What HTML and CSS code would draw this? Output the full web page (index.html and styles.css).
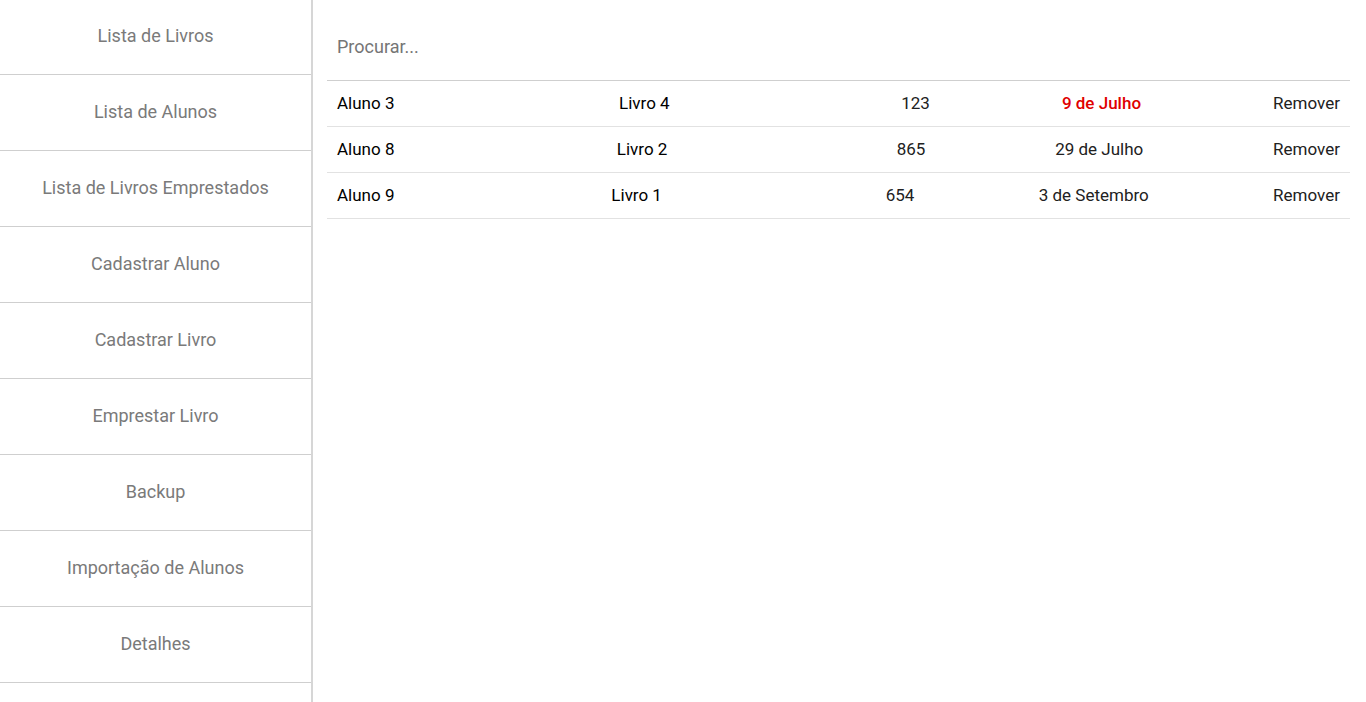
FILE: index.html
```html
<!DOCTYPE html>
<html lang="pt">
<head>
<meta charset="utf-8">
<title>Biblioteca</title>
<link rel="stylesheet" href="styles.css">
</head>
<body>
<div class="app">
  <nav class="sidebar">
    <a class="nav-item">Lista de Livros</a>
    <a class="nav-item">Lista de Alunos</a>
    <a class="nav-item">Lista de Livros Emprestados</a>
    <a class="nav-item">Cadastrar Aluno</a>
    <a class="nav-item">Cadastrar Livro</a>
    <a class="nav-item">Emprestar Livro</a>
    <a class="nav-item">Backup</a>
    <a class="nav-item">Importação de Alunos</a>
    <a class="nav-item">Detalhes</a>
  </nav>
  <main class="main">
    <div class="search">
      <input class="search-input" type="text" placeholder="Procurar...">
    </div>
    <div class="list">
      <div class="row">
        <span class="cell name">Aluno 3</span>
        <span class="cell name">Livro 4</span>
        <span class="cell num">123</span>
        <span class="cell date late">9 de Julho</span>
        <span class="cell action">Remover</span>
      </div>
      <div class="row">
        <span class="cell name">Aluno 8</span>
        <span class="cell name">Livro 2</span>
        <span class="cell num">865</span>
        <span class="cell date">29 de Julho</span>
        <span class="cell action">Remover</span>
      </div>
      <div class="row">
        <span class="cell name">Aluno 9</span>
        <span class="cell name">Livro 1</span>
        <span class="cell num">654</span>
        <span class="cell date">3 de Setembro</span>
        <span class="cell action">Remover</span>
      </div>
    </div>
  </main>
</div>
</body>
</html>
```

FILE: styles.css
```css
* { box-sizing: border-box; }
html, body {
  margin: 0;
  padding: 0;
  height: 100%;
  background: #fff;
  font-family: Roboto, "Liberation Sans", Arial, sans-serif;
}
.app {
  display: flex;
  height: 702px;
  overflow: hidden;
}
.sidebar {
  width: 313px;
  flex: 0 0 313px;
  margin-top: -1px;
  border-right: 2px solid #d6d6d6;
  display: flex;
  flex-direction: column;
}
.nav-item {
  height: 76px;
  flex: 0 0 76px;
  padding-bottom: 2px;
  display: flex;
  align-items: center;
  justify-content: center;
  border-bottom: 1px solid #cfcfcf;
  color: #7a7a7a;
  font-size: 18px;
  text-decoration: none;
  cursor: pointer;
}
.main {
  flex: 1;
  padding: 0 16px 0 14px;
}
.search {
  height: 81px;
  padding-top: 12px;
  border-bottom: 1px solid #cfcfcf;
  display: flex;
  align-items: center;
}
.search-input {
  border: none;
  outline: none;
  width: 100%;
  padding: 0 10px;
  font-family: inherit;
  font-size: 18px;
  color: #212121;
  background: transparent;
}
.search-input::placeholder {
  color: #757575;
}
.row {
  height: 46px;
  display: flex;
  align-items: center;
  justify-content: space-between;
  padding: 0 10px 2px;
  border-bottom: 1px solid #e2e2e2;
  font-size: 17px;
}
.cell.name {
  width: 150px;
  color: #000;
}
.cell.num,
.cell.date,
.cell.action {
  color: #212121;
}
.cell.late {
  color: #e00000;
  font-weight: 500;
}
```
